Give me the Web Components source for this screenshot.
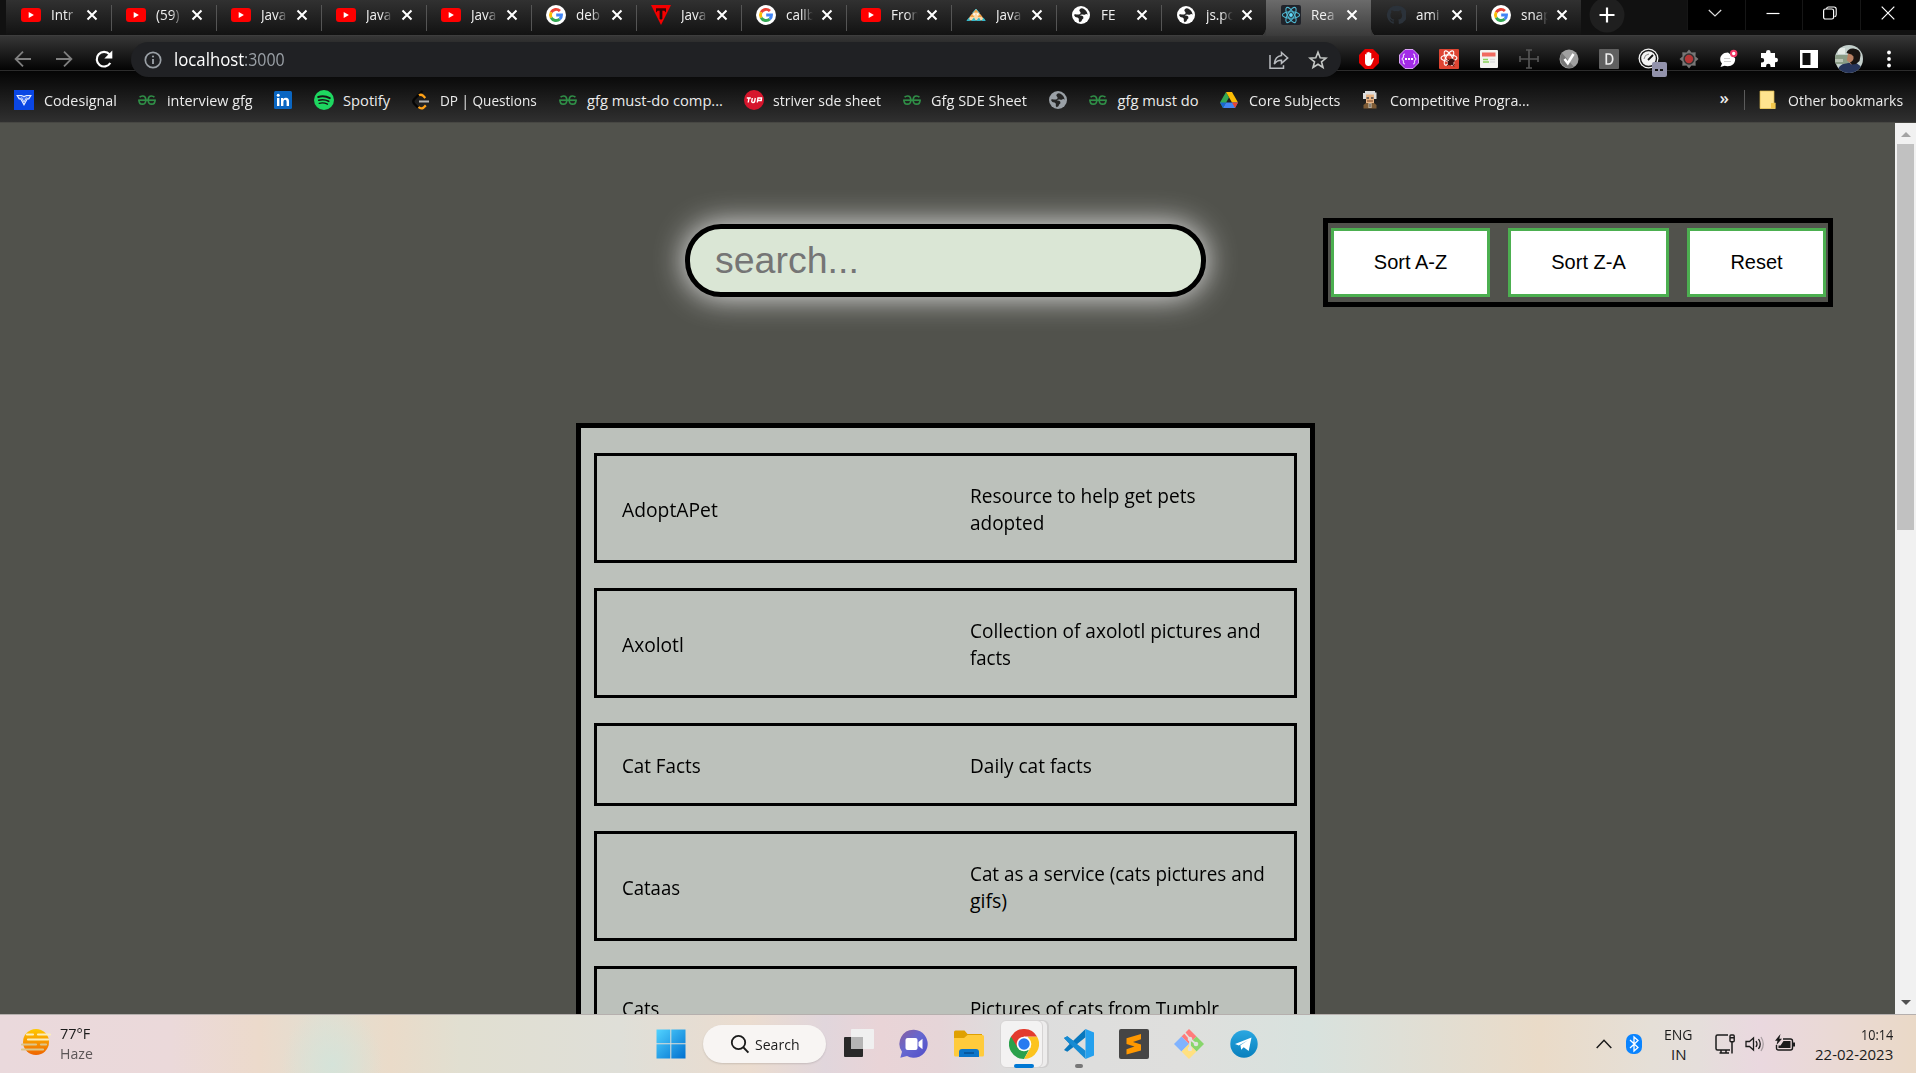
<!DOCTYPE html>
<html lang="en">
<head>
<meta charset="utf-8">
<title>React App</title>
<style>
html,body{margin:0;padding:0;height:100%;overflow:hidden;background:#51524c}
body{font-family:"Open Sans","Noto Sans",sans-serif;font-size:15px}
</style>
</head>
<body>
<desktop-screen></desktop-screen>
<script>
const gG='<circle cx="10" cy="10" r="10" fill="#fff"/><g fill="none" stroke-width="2.9"><path d="M5.2 7.3A5.5 5.5 0 0 1 13.9 6" stroke="#ea4335"/><path d="M5.2 7.3a5.6 5.6 0 0 0 0 5.4" stroke="#fbbc05"/><path d="M5.2 12.7a5.5 5.5 0 0 0 8.5 1.4" stroke="#34a853"/><path d="M13.7 14.1a5.4 5.4 0 0 0 1.8-4.1H10.2" stroke="#4285f4"/></g>';
const globe=c=>`<circle cx="10" cy="10" r="9" fill="${c}"/><path d="M10.5 3.2q-2.7 1-2 2.8 1.6 1 .9 2.7-1.800 1.300-4.800.6-1.400-.5-1.500.9 1 2.600 3.500 2.400 1.900.8 1.200 3.400l.8 1.200q2.300-.6 2.600-2.600 2-1 1-3-1.200-1.200-3.200-1 .4-1.400 2.700-1.200 1.900.8 2.800-.2 1.700-.4 2.100 1-.2-4.600-4.500-6.600z" fill="#242424"/>`;
const gfg='<g fill="none" stroke="#2f8d46" stroke-width="1.700"><path d="M1.200 10.200h17.600"/><path d="M2.600 7.300q1-1.300 3-1.300Q8.800 6 8.800 10.200T5.200 14.200Q2 14.200 2 10.200M17.400 7.300q-1-1.300-3-1.300Q11.200 6 11.200 10.200t3.600 4Q18 14.200 18 10.200"/></g>';
const ICONS={
youtube:[20,20,'<rect x="0" y="3" width="20" height="14" rx="3" fill="#f00"/><path d="M7.700 7.100v5.800l5.200-2.900z" fill="#fff"/>'],
google:[20,20,gG],
tri:[20,20,'<path d="M0 0h20L10 20z" fill="#f50000"/><path d="M5 3.200h10v4.200l-1.700-1.700h-1.900v8.200h-2.800V5.700H6.700L5 7.400z" fill="#3b0505"/><path d="M9.200 5.500h1.600v9H9.200z" fill="#111"/>'],
tents:[20,20,'<path d="M10 4L1 15.500h18z" fill="#f9d9a8"/><path d="M10 4L7.500 7.500h5zM6 9l2.500 3h-5zM14 9l2.500 3h-5z" fill="#f2a044"/><path d="M7 8.500h2.500L8 10.500zM10.500 8.500H13l-1.500 2z" fill="#fff"/><path d="M3 12.500L.3 16h3.700zM8 12.500L5 16h5zM13 12.500L10 16h5zM17.500 12.500L15.500 16h4.300z" fill="#35b8c9"/><path d="M10 4L6.500 8M10 4l3.500 4" stroke="#4bc3d0" stroke-width=".8"/>'],
globe:[20,20,globe('#fff')],
globegray:[20,20,globe('#9aa0a6')],
react:[20,20,'<rect width="20" height="20" rx="2" fill="#20232a"/><g fill="none" stroke="#4fb8d2" stroke-width="1.100"><ellipse cx="10" cy="10" rx="8.600" ry="3.300"/><ellipse cx="10" cy="10" rx="8.600" ry="3.300" transform="rotate(60 10 10)"/><ellipse cx="10" cy="10" rx="8.600" ry="3.300" transform="rotate(120 10 10)"/></g><circle cx="10" cy="10" r="1.900" fill="#61dafb"/>'],
github:[20,20,'<path d="M10 .8a9.200 9.200 0 0 0-2.900 17.900c.5.100.7-.2.700-.5v-1.700c-2.400.5-3-1-3.200-1.600l-.9-1.100c1 0 1.600.8 1.900 1.300.7 1 1.600.8 2.200.6 0-.5.300-.9.600-1.100-2-.3-4-1-4-4.400 0-1 .4-1.800 1-2.400-.1-.4-.4-1.300.1-2.500 0 0 .8-.2 2.500 1a8.600 8.600 0 0 1 4.500 0c1.700-1.200 2.500-1 2.500-1 .5 1.200.2 2.100.1 2.500.6.600 1 1.400 1 2.400 0 3.400-2.100 4.100-4.100 4.400.4.300.7.900.7 1.700v2.200c0 .3.100.6.600.5A9.200 9.200 0 0 0 10 .8z" fill="#2b323a"/>'],
close:[12,12,'<path d="M1.500 1.500l9 9M10.500 1.500l-9 9" stroke="#fff" stroke-width="2" fill="none"/>'],
plus:[36,36,'<circle cx="18" cy="18" r="17.500" fill="#1f1f1f"/><path d="M18 10.500v15M10.500 18h15" stroke="#fff" stroke-width="2.200"/>'],
down:[14,14,'<path d="M.8 4l6.200 6 6.200-6" fill="none" stroke="#ddd" stroke-width="1.200"/>'],
min:[14,14,'<path d="M.5 7.500h13" stroke="#fff" stroke-width="1.200"/>'],
max:[14,14,'<rect x=".6" y="3" width="10" height="10" rx="1.800" fill="none" stroke="#fff" stroke-width="1.200"/><path d="M3.500 2.800Q3.800 1 5.500 1H11q2.200 0 2.200 2.200v5.500q0 1.600-1.700 1.900" fill="none" stroke="#fff" stroke-width="1.100"/>'],
wclose:[14,14,'<path d="M.7.700l12.600 12.600M13.300.700L.700 13.300" stroke="#fff" stroke-width="1.200"/>'],
back:[20,20,'<path d="M18 10H3M10 2.600L2.600 10l7.400 7.400" fill="none" stroke="#7f7f7f" stroke-width="1.800"/>'],
fwd:[20,20,'<path d="M2 10h15M10 2.600l7.400 7.400-7.400 7.400" fill="none" stroke="#7f7f7f" stroke-width="1.800"/>'],
reload:[20,20,'<path d="M16.300 14A7.300 7.300 0 1 1 15.500 5.300" fill="none" stroke="#fff" stroke-width="2.200"/><path d="M18.300 1.500v8h-8z" fill="#fff"/>'],
info:[20,20,'<circle cx="10" cy="10" r="7.700" fill="none" stroke="#9aa0a6" stroke-width="1.700"/><path d="M10 9v5" stroke="#9aa0a6" stroke-width="1.900"/><circle cx="10" cy="6.500" r="1.100" fill="#9aa0a6"/>'],
share:[20,20,'<path d="M1 5v13.200h13.500v-3" fill="none" stroke="#b9bcc0" stroke-width="1.500"/><path d="M12.500 2.500l6.200 5.400-6.200 5.400v-3.100Q8 10 5.300 14 6 6.500 12.500 5.600z" fill="none" stroke="#b9bcc0" stroke-width="1.500"/>'],
star:[20,20,'<path d="M10 2.200l2.200 5.500 5.900.4-4.600 3.700 1.500 5.700L10 14.300l-5 3.200 1.500-5.700L1.900 8.100l5.900-.4z" fill="none" stroke="#c4c7c5" stroke-width="1.600"/>'],
adblock:[20,20,'<path d="M6 0h8l6 6v8l-6 6H6l-6-6V6z" fill="#e60000"/><path d="M6 10V5.500q.8-1 1.500 0V9V3.800q.8-1 1.600 0V8.500V3.200q.8-1 1.600 0v5.300V4.200q.8-1 1.600 0v6.800l1.300-1.700q1-.7 1.400.3L13 14.500Q12 17 9.700 17 6 17 6 13z" fill="#fff"/>'],
bugs:[20,20,'<path d="M6 .5h8L19.500 6v8L14 19.500H6L.5 14V6z" fill="#a32be8" stroke="#d9a1f7" stroke-width="1"/><path d="M6 5q-2 0-1.500 3L3 10l1.500 2Q4 15 6 15M14 5q2 0 1.500 3l1.500 2-1.500 2q.5 3-1.500 3" stroke="#e9cffb" fill="none" stroke-width="1.200"/><path d="M6 10h2m1 0h2m1 0h2" stroke="#fff" stroke-width="2"/>'],
redreact:[20,20,'<rect width="20" height="20" rx="1" fill="#dd4432"/><g fill="none" stroke="#fff" stroke-width="1.100"><ellipse cx="10" cy="9" rx="8" ry="3.100"/><ellipse cx="10" cy="9" rx="8" ry="3.100" transform="rotate(60 10 9)"/><ellipse cx="10" cy="9" rx="8" ry="3.100" transform="rotate(120 10 9)"/></g><ellipse cx="12" cy="13" rx="2.500" ry="3.700" transform="rotate(35 12 13)" fill="#3c1010"/><path d="M7.500 11.500l8 4M8 16.500l8-5M9 9.500l6 8" stroke="#3c1010"/>'],
doc:[20,20,'<rect x="1" y="1" width="18" height="18" rx="1" fill="#f3f3ef"/><rect x="3" y="3.500" width="13.500" height="4" fill="#f06b60"/><path d="M4 10.500h5M4 13h6" stroke="#8bd35b" stroke-width="1.600"/><path d="M11 10.500h5M11 13h5" stroke="#ddd" stroke-width="1.500"/>'],
cross:[20,20,'<path d="M10 1v18M1 10h18M7 1h6M7 19h6M1 7v6M19 7v6M8 10h4" stroke="#555" stroke-width="1.700"/>'],
check:[20,20,'<circle cx="10" cy="10" r="9.500" fill="#a0a0a0"/><path d="M3 4a9.500 9.500 0 0 0 12 14" fill="#777"/><path d="M5.500 10l3.300 4.200L14.500 5" fill="none" stroke="#fff" stroke-width="2.600"/>'],
d:[20,20,'<rect width="20" height="20" rx="1" fill="#606060"/><path d="M7.300 5v10h2.200q4.200 0 4.200-5T9.500 5z" fill="none" stroke="#eee" stroke-width="1.700"/>'],
gauge:[22,22,'<circle cx="10.500" cy="10.500" r="10" fill="#f2f2f2"/><circle cx="10.500" cy="10.500" r="8" fill="#f2f2f2" stroke="#151515" stroke-width="1.400"/><path d="M10 12l5-5" stroke="#111" stroke-width="1.800"/><path d="M6 11q.5-4.500 5-5" stroke="#888" fill="none"/>'],
gearred:[20,20,'<path d="M10 .5l2.500 3 4.200-.2-.2 4.200 3 2.500-3 2.500.2 4.200-4.200-.2-2.500 3-2.500-3-4.200.2.200-4.200-3-2.500 3-2.500-.2-4.200 4.200.2z" fill="#777"/><circle cx="10" cy="10" r="4.900" fill="#b53636" stroke="#333" stroke-width="1.500"/>'],
chat:[20,20,'<path d="M9 3.500c-8 0-9.500 8-6 11L1.500 18l4-1.200C13 18.500 17 14 16 9z" fill="#fff"/><circle cx="14.700" cy="4.500" r="2.700" fill="#fff" stroke="#f43b68" stroke-width="2"/><path d="M5 9.500h6M5 12.500h7" stroke="#ccc" stroke-width="1.200"/>'],
puzzle:[20,20,'<path d="M7 4V3.200a2.300 2.300 0 0 1 4.600 0V4H16v4.700h.700a2.300 2.300 0 0 1 0 4.600H16V18h-4.500v-1a2.200 2.200 0 0 0-4.400 0v1H2v-4.600h1a2.200 2.200 0 0 0 0-4.400H2V4z" fill="#fff"/>'],
panel:[20,20,'<path d="M1 1h18v18H1z" fill="#fff"/><path d="M3.500 4h8v12h-8z" fill="#111"/>'],
avatar:[28,28,'<defs><clipPath id="c"><circle cx="14" cy="14" r="14"/></clipPath></defs><g clip-path="url(#c)"><rect width="28" height="28" fill="#c3cfcb"/><path d="M0 10h14v9H0z" fill="#8a9c86"/><path d="M3 3h7v6H3z" fill="#e4eae6"/><path d="M0 14h8v3H0z" fill="#b9c4b5"/><path d="M2 28q1-9 9-9.500l7-1.500q9 2 10 11z" fill="#27355b"/><path d="M13 8.500l5-2 4 5v6l-6 2-2-2.500-2.200-1.500z" fill="#b98063"/><path d="M11.500 8Q13 3 18.500 3.500q7 .5 7 7l-1 5.500-3.500 3-4 .5-2-2q4-1.500 3.500-6l-2-2z" fill="#191412"/></g>'],
dots:[20,20,'<g fill="#fff"><circle cx="10" cy="3.500" r="1.900"/><circle cx="10" cy="10" r="1.900"/><circle cx="10" cy="16.500" r="1.900"/></g>'],
codesignal:[20,20,'<rect width="20" height="20" fill="#0a46e4"/><path d="M3.200 5.500h4.300l2.500 1.100 2.500-1.100h4.300l-2 3.300h-1.500L10 14.800 6.700 8.800H5.200z" fill="#3d6df0" stroke="#e6edff" stroke-width="1.200"/><path d="M7.500 7.500l2.500 4.500 2.500-4.500" fill="none" stroke="#cfdcff" stroke-width="1"/>'],
gfg:[20,20,gfg],
linkedin:[20,20,'<rect x="1" y="1" width="18" height="18" rx="1.500" fill="#0a66c2"/><path d="M4 8h2.400v8H4zM8 8h2.300v1.200Q11 7.800 13 7.800q3 0 3 3.600V16h-2.400v-4.200q0-2-1.500-2-1.700 0-1.700 2.100V16H8z" fill="#fff"/><circle cx="5.200" cy="5.300" r="1.500" fill="#fff"/>'],
spotify:[20,20,'<circle cx="10" cy="10" r="10" fill="#1ed760"/><g fill="none" stroke="#151515" stroke-linecap="round"><path d="M4.200 7q6-1.700 11.600 1.100" stroke-width="2"/><path d="M4.800 10.300q5.200-1.400 9.900 1" stroke-width="1.600"/><path d="M5.200 13.300q4.400-1.100 8.300.9" stroke-width="1.300"/></g>'],
leet:[20,20,'<path d="M11.500 1L3 9.500q-1.500 2 0 4l4 4" fill="none" stroke="#050505" stroke-width="2.300"/><path d="M8 5.300q2-1.300 4 .4l2.300 2.300M7.500 17q2.500 2.300 5 .7l2.300-2.300" fill="none" stroke="#ffa116" stroke-width="2.300"/><path d="M8 11.500h10" stroke="#b3b3b3" stroke-width="2"/>'],
tuf:[20,20,'<circle cx="10" cy="10" r="10" fill="#d6152c"/><path d="M2.800 8h4M5 8l-.8 4.500M8.300 8l-.6 3.700q.2.900 1.300.8 1.200 0 1.600-.9l.7-3.600M13.300 12.500L14 8h3.500l-.3 2.500h-3" fill="none" stroke="#fff" stroke-width="1.400"/>'],
drive:[20,20,'<path d="M7 2L1 12.600 4 18l6-10.500z" fill="#34a853"/><path d="M7 2h6l6 10.600h-6z" fill="#fbbc04"/><path d="M7 12.600h12L16 18H4z" fill="#4285f4"/><path d="M13 12.600h6L16 18z" fill="#ea4335"/><path d="M7 12.600H1L4 18z" fill="#1967d2"/>'],
einstein:[20,20,'<path d="M5 1h10v1.500h1.500V9H14V5H6v4H3V3h2z" fill="#ddd"/><path d="M6 4.500h8V13H6z" fill="#e8b382"/><path d="M6.500 8h2.500m2 0h2.500" stroke="#444" stroke-width="1.300"/><path d="M7 11h6" stroke="#8c5a3a" stroke-width="1.300"/><path d="M6 13h8l2.500 2v3.500h-13V15z" fill="#7c5a35"/><path d="M8.500 13h3v5h-3z" fill="#d9cdbb"/><path d="M9.500 13.500h1v4h-1z" fill="#333"/>'],
folder:[20,20,'<path d="M2 1h14v13h1v5H2z" fill="#ffe48f"/><path d="M13 13h4v5h-4z" fill="#f4c84b"/><path d="M2 1h14v12h1.500v5.500H2z" fill="none" stroke="#d9b64c" stroke-width=".7"/>'],
haze:[30,28,'<defs><linearGradient id="h" x2="0" y2="1"><stop stop-color="#ffc900"/><stop offset="1" stop-color="#ef6400"/></linearGradient></defs><circle cx="15" cy="14" r="13" fill="url(#h)"/><g stroke-width="2.200" stroke-linecap="round"><path d="M6 6.500h6m5 0h12M7 11.500h20" stroke="#fbeebc"/><path d="M1 16.500h14m5 0h5M1 21.500h21" stroke="#dcc68a"/></g>'],
win:[30,30,'<defs><linearGradient id="w" x2="1" y2="1"><stop stop-color="#52d3ff"/><stop offset="1" stop-color="#0070d0"/></linearGradient></defs><path d="M.5.500H14.300V14.300H.5zM15.300.500H29.500V14.300H15.300zM.5 15.300H14.300V29.500H.5zM15.300 15.300H29.500V29.500H15.300z" fill="url(#w)"/>'],
mag:[20,20,'<circle cx="8.500" cy="8.500" r="6.700" fill="none" stroke="#1a1a1a" stroke-width="1.800"/><path d="M13.400 13.400l5 5.200" stroke="#1a1a1a" stroke-width="2"/>'],
task:[30,30,'<rect x="0" y="8" width="19" height="20" rx="1" fill="#292929"/><rect x="7" y="0" width="23" height="20" rx="1" fill="#f0f0f0"/><rect x="7" y="8" width="12" height="12" fill="#b5b5b5"/>'],
teams:[30,30,'<defs><linearGradient id="t" x1="0" y1="0" x2="1" y2="1"><stop stop-color="#8a5f9e"/><stop offset=".45" stop-color="#6668d0"/><stop offset="1" stop-color="#514dc8"/></linearGradient></defs><path d="M15 .8a14 14 0 1 1-7 26.300L1.300 28.700 3 22.800A14 14 0 0 1 15 .8z" fill="url(#t)"/><rect x="6.500" y="9" width="12" height="12" rx="2" fill="#fff"/><path d="M19.500 13l4-3.300v10.600l-4-3.300z" fill="#fff"/>'],
explorer:[30,30,'<path d="M0 3q0-1.500 1.500-1.500h9L13.500 5H28v5H0z" fill="#dfa000"/><path d="M0 9h10l3.500-3H28.500Q30 6 30 7.500V26q0 1.500-1.500 1.500h-27Q0 27.500 0 26z" fill="#ffcb3c"/><path d="M5 28v-5q0-3 3-3h14q3 0 3 3v5z" fill="#0c75c9"/><path d="M10 24h10" stroke="#064f91" stroke-width="1.500"/>'],
chrome:[30,30,'<path d="M2 7.500A15 15 0 0 0 15 30l6.200-11.500L15 15z" fill="#2aa14b"/><path d="M28 7.500A15 15 0 0 1 15 30l6.500-11.200L19 7.500z" fill="#fcc31e"/><path d="M15 7.500h13A15 15 0 0 0 2 7.500l6.500 11z" fill="#e33b2e"/><circle cx="15" cy="15" r="7.300" fill="#fff"/><circle cx="15" cy="15" r="5.700" fill="#287af0"/>'],
vscode:[30,30,'<path d="M21.500 0L9.200 11.800 3.300 7.300 0 9l5.600 6L0 21l3.300 1.700 5.900-4.500L21.500 8.300z" fill="#0877bd"/><path d="M0 9l3.300-1.700L21.500 21.700V30L9.500 18.300z" fill="#168bd3"/><path d="M21.500 0L30 3.500v23L21.500 30z" fill="#24a0ee"/>'],
sublime:[30,30,'<rect width="30" height="30" rx="2" fill="#454545"/><path d="M22 5v5.300L14 13l8 2.600v5.800L7.500 25.500v-5.200l8-2.800-8-2.600V9.200z" fill="#ff9800"/>'],
git:[30,30,'<path d="M15 0l7.500 7.500L15 15 7.500 7.500z" fill="#ff7b7b"/><path d="M22.500 7.500L30 15l-7.500 7.500L15 15z" fill="#88d66c"/><path d="M7.500 7.500L15 15l-7.500 7.500L0 15z" fill="#80b3ff"/><path d="M15 15l7.500 7.500L15 30l-7.500-7.500z" fill="#ffe080"/><path d="M10 3l6 7v10M16 10l6 5" fill="none" stroke="#e1e2e0" stroke-width="1.800"/><circle cx="16" cy="10" r="2.300" fill="#e1e2e0"/><circle cx="22" cy="15" r="2.300" fill="#e1e2e0"/><circle cx="16" cy="20" r="2.300" fill="#e1e2e0"/>'],
telegram:[28,28,'<defs><linearGradient id="g" x2="0" y2="1"><stop stop-color="#2aa7e1"/><stop offset="1" stop-color="#087fbd"/></linearGradient></defs><circle cx="14" cy="14" r="13.700" fill="url(#g)"/><path d="M5 14L21.500 7.500 18.700 21l-5-3.700-2.500 2.500-.8-4.600 7.600-5-9.200 5.200z" fill="#fff"/>'],
up:[16,10,'<path d="M.7 9L8 1.300 15.300 9" fill="none" stroke="#1b1b1b" stroke-width="1.500"/>'],
bt:[16,20,'<rect width="16" height="20" rx="7" fill="#0a84ff"/><path d="M4 6l8 7.500L8 17V3l4 3.500L4 14" fill="none" stroke="#fff" stroke-width="1.300"/>'],
monitor:[20,20,'<path d="M13 1H2.500Q1 1 1 2.500v12Q1 16 2.500 16H15M6 16v3m5-3v3M4.500 19H14" fill="none" stroke="#1b1b1b" stroke-width="1.500"/><rect x="15" y="1" width="4.200" height="6.800" rx="1" fill="none" stroke="#1b1b1b" stroke-width="1.400"/><path d="M15 3.700h4M17 8v11.500" stroke="#1b1b1b" stroke-width="1.500"/>'],
speaker:[20,20,'<path d="M1 7.500h3.500L8.500 4v12l-4-3.500H1z" fill="none" stroke="#1b1b1b" stroke-width="1.300"/><path d="M11 7q2 3 0 6M13.500 5q3.500 5 0 10" fill="none" stroke="#1b1b1b" stroke-width="1.300"/><path d="M16 3q4.500 7 0 14" fill="none" stroke="#a99fa3" stroke-width="1.300"/>'],
battery:[20,20,'<path d="M8 5h7.500Q17.500 5 17.500 7v7q0 2-2 2H3.500q-2 0-2-2v-3" fill="none" stroke="#1b1b1b" stroke-width="1.400"/><path d="M8.500 7H15.500v7h-12v-2.500h2z" fill="#1b1b1b"/><path d="M18 8.500h2v4h-2z" fill="#1b1b1b"/><path d="M5.500 0L0 6.700h2.500L1.500 11 7 4.800H4.300z" fill="#1b1b1b"/>']
};
const define=(n,css,html,after)=>customElements.define(n,class extends HTMLElement{
  connectedCallback(){
    if(this.shadowRoot)return;
    const r=this.attachShadow({mode:'open'});
    r.innerHTML=`<style>${css}</style>${typeof html==='function'?html(this):html}`;
    if(after)after(this,r);
  }
});
const at=(e,n,d='')=>e.getAttribute(n)??d;

define('ui-icon',':host{display:block;flex:none}svg{display:block}',e=>{
  const [w,h,b]=ICONS[at(e,'name')];
  return `<svg width="${w}" height="${h}" viewBox="0 0 ${w} ${h}">${b}</svg>`;
});

/* Text squeezed or stretched horizontally so it occupies exactly w pixels. */
define('fit-text',':host{display:block;flex:none;white-space:pre}span{display:inline-block;transform-origin:0 50%}',
  e=>`<span>${at(e,'text')}</span>`,
  (e,r)=>{const s=r.querySelector('span'),w=+at(e,'w');e.style.width=w+'px';s.style.transform=`scaleX(${w/s.offsetWidth})`;});

define('browser-tab',`:host{display:flex;flex:none;align-items:center;box-sizing:border-box;width:105px;height:35px;padding:0 0 5px 15px;position:relative;color:#f1f1f1;background:linear-gradient(#313131,#121212)}
:host([active]){background:linear-gradient(#6b6b6b,#393939);height:37px;padding-bottom:7px;z-index:1}
:host([active])::before,:host([active])::after{content:"";position:absolute;bottom:0;width:9px;height:9px}
:host([active])::before{left:-9px;background:radial-gradient(circle at 0 0,transparent 8.500px,#393939 9px)}
:host([active])::after{right:-9px;background:radial-gradient(circle at 100% 0,transparent 8.500px,#393939 9px)}
.t{width:28px;margin:0 7px 0 10px;overflow:hidden;white-space:pre;line-height:20px;font-size:14.500px;-webkit-mask:linear-gradient(90deg,#000 55%,transparent 96%)}
.t span{display:inline-block;transform:scaleX(.93);transform-origin:0 0}
:host([plain]) .t{-webkit-mask:none}
i{width:1px;height:26px;background:#555;margin:5px -1px 0 auto;position:relative;z-index:1}`,
 e=>`<ui-icon name="${at(e,'icon')}"></ui-icon><div class="t"><span>${at(e,'text')}</span></div><ui-icon name="close"></ui-icon>${e.hasAttribute('nosep')?'':'<i></i>'}`);

define('tab-strip',`:host{display:flex;height:35px;background:#111;border-bottom:1px solid #3d3d3d;padding-left:6px}
.new{width:36px;margin:-3px 0 0 8px}
.win{display:flex;margin-left:auto;height:30px;background:#000;gap:1px;width:229px}
.win div{flex:1;display:flex;justify-content:center;align-items:center;padding:0 1px 5px 0;height:25px;border-left:1px solid #161616}`,
 ()=>{
  const T=[['youtube','Intr'],['youtube','(59)'],['youtube','Java'],['youtube','Java'],['youtube','Java'],['google','deb'],['tri','Java'],['google','callb'],['youtube','Fron'],['tents','Java'],['globe','FE'],['globe','js.po'],['react','Rea'],['github','ami'],['google','snap']];
  return T.map(([i,t],n)=>`<browser-tab icon="${i}" text="${t}" ${n==12?'active':''} ${n==10?'plain':''} ${n==11||n==12||n==14?'nosep':''}></browser-tab>`).join('')+
  '<div class="new"><ui-icon name="plus"></ui-icon></div><div class="win">'+['down','min','max','wclose'].map(i=>`<div><ui-icon name="${i}"></ui-icon></div>`).join('')+'</div>';
 });

define('tool-bar',`:host{display:flex;height:34px;background:linear-gradient(#363636,#030303);border-bottom:1px solid #2c2c2c;align-items:flex-start;position:relative;z-index:1}
.nav{display:flex;padding:13px 17px 0 13px;gap:20.500px;width:101px}
.pill{display:flex;align-items:center;box-sizing:border-box;width:1210px;height:35px;margin-top:6px;border-radius:18px;background:#202124;padding:0 13px 0 12px;color:#fff;font-size:17.500px;line-height:22px}
.pill fit-text{margin-top:-1px}
.pill fit-text:first-of-type{margin-left:11px}.port{color:#9aa0a6}
.pill .s{margin-left:auto;margin-right:19px}
.ext{display:flex;margin-left:7.500px;padding-top:13px}
.e{width:40px;display:flex;justify-content:center;height:20px;align-items:center;position:relative}
b{position:absolute;left:23px;top:13px;width:15px;height:15px;border-radius:2px;background:#9292ab;display:flex;align-items:center;justify-content:center}
b::after{content:"";width:8px;height:2px;background:linear-gradient(90deg,#111 40%,transparent 40% 60%,#111 60%)}`,
 ()=>`<div class="nav"><ui-icon name="back"></ui-icon><ui-icon name="fwd"></ui-icon><ui-icon name="reload"></ui-icon></div>
 <div class="pill"><ui-icon name="info"></ui-icon><fit-text text="localhost" w="70"></fit-text><fit-text class="port" text=":3000" w="41"></fit-text><ui-icon class="s" name="share"></ui-icon><ui-icon name="star"></ui-icon></div>
 <div class="ext">${['adblock','bugs','redreact','doc','cross','check','d','gauge','gearred','chat','puzzle','panel','avatar','dots'].map(i=>`<div class="e"><ui-icon name="${i}"></ui-icon>${i=='gauge'?'<b></b>':''}</div>`).join('')}</div>`);

define('book-mark',':host{display:flex;align-items:center;gap:9.500px;flex:none;line-height:20px}fit-text{margin-top:-1px}',
 e=>`<ui-icon name="${at(e,'icon')}"></ui-icon>${at(e,'text')?`<fit-text text="${at(e,'text')}" w="${at(e,'w')}"></fit-text>`:''}`);

define('bookmarks-bar',`:host{display:flex;box-sizing:border-box;height:52px;background:linear-gradient(#050505,#303030);border-bottom:1px solid #474743;padding:7px 13px 0 14px;gap:20.500px;align-items:center;color:#ebebeb;font-size:14.700px}
.more{margin-left:auto;font-weight:600;font-size:17px;margin-right:-6px;padding-bottom:5px}i{width:1px;height:20px;background:#5b5b5b;margin-right:-7px}`,
 ()=>[['codesignal','Codesignal',73],['gfg','interview gfg',86],['linkedin'],['spotify','Spotify',47],['leet','DP | Questions',97],['gfg','gfg must-do comp...',136],['tuf','striver sde sheet',108],['gfg','Gfg SDE Sheet',96],['globegray'],['gfg','gfg must do',81],['drive','Core Subjects',91],['einstein','Competitive Progra...',140]].map(([i,t,w])=>`<book-mark icon="${i}" ${t?`text="${t}" w="${w}"`:''}></book-mark>`).join('')+
 '<span class="more">»</span><i></i><book-mark icon="folder" text="Other bookmarks" w="115.500"></book-mark>');

define('search-box',`:host{display:flex;align-items:center;box-sizing:border-box;width:521px;height:73px;border:5px solid #000;border-radius:36px;background:#dae6d5;box-shadow:0 0 31px #efefef;padding-left:25px;font:37.500px "Liberation Sans",Arial,sans-serif;color:#757575}`,
 '<slot></slot>');
define('sort-button',`:host{display:flex;align-items:center;justify-content:center;box-sizing:border-box;height:69px;border:3px solid #4caf50;background:#fff;color:#000;font:20px "Liberation Sans",Arial,sans-serif}`,'<slot></slot>');
define('sort-controls',`:host{display:flex;box-sizing:border-box;width:510px;height:89px;border:5px solid #000;padding:5px 2px 0 3px;justify-content:space-between}
.a{width:159px}.b{width:161px}.c{width:139px}`,
 '<sort-button class="a">Sort A-Z</sort-button><sort-button class="b">Sort Z-A</sort-button><sort-button class="c">Reset</sort-button>');

define('api-card',`:host{display:flex;align-items:center;box-sizing:border-box;border:3px solid #000;padding:26px 25px 24px;color:#000;font-size:19.500px;line-height:27px}
.n{width:348px}`,
 e=>`<div class="n"><fit-text text="${at(e,'name')}" w="${at(e,'nw')}"></fit-text></div><div>${at(e,'lines').split('|').map(l=>{const[t,w]=l.split('~');return `<fit-text text="${t}" w="${w}"></fit-text>`}).join('')}</div>`);

define('api-list',`:host{display:flex;flex-direction:column;gap:25px;box-sizing:border-box;width:739px;flex:none;border:5px solid #000;background:#bcc1bb;padding:25px 13px}`,
 ()=>[['AdoptAPet',96,'Resource to help get pets~226|adopted~74'],['Axolotl',62,'Collection of axolotl pictures and~291|facts~41'],['Cat Facts',79,'Daily cat facts~122'],['Cataas',58,'Cat as a service (cats pictures and~295|gifs)~37'],['Cats',37,'Pictures of cats from Tumblr~249']].map(([n,w,l])=>`<api-card name="${n}" nw="${w}" lines="${l}"></api-card>`).join(''));

define('scroll-bar',`:host{display:flex;flex-direction:column;align-items:center;justify-content:space-between;box-sizing:border-box;width:21px;background:#f1f1f1;padding:8px 0 8px}
.thumb{width:17px;height:386px;background:#c1c1c1;margin:7px 0 auto}
svg{display:block}`,
 '<svg width="10" height="6"><path d="M0 6l5-5 5 5z" fill="#a3a3a3"/></svg><div class="thumb"></div><svg width="10" height="6"><path d="M0 0h10L5 5z" fill="#505050"/></svg>');

define('web-page',`:host{display:flex;height:891px;overflow:hidden;background:#51524c}
main{flex:1;height:891px;overflow:hidden}
.top{display:flex;align-items:flex-start;padding:95px 0 0 685px;height:205px}
search-box{margin-top:6px}sort-controls{margin-left:117px}
api-list{margin-left:576px}`,
 '<main><div class="top"><search-box>search...</search-box><sort-controls></sort-controls></div><api-list></api-list></main><scroll-bar></scroll-bar>');

define('task-bar',`:host{display:flex;box-sizing:border-box;height:59px;border-top:1px solid #b5afad;color:#1b1b1b;font-size:15px;line-height:20px;
background:radial-gradient(ellipse 50px 60px at 332px 50px,#d5e3d9,transparent),linear-gradient(90deg,#ead9dc 0,#ebd9da 170px,#ecdacb 260px,#e2dfd2 325px,#eadbc9 390px,#e1dfd1 460px,#dfdfd8 620px,#ebdccf 750px,#e1d6dc 825px,#e9d4d7 880px,#e6d5d8 940px,#dddddd 1010px,#dfdfdd 1180px,#d8e2de 1310px,#dfdfd6 1400px,#eadbc8 1540px,#e5dfd7 1650px,#e5dedb 1700px,#ead8df 1760px,#ead9d5 1830px,#ead9c7 1916px)}
.w{display:flex;gap:9px;padding:13px 0 0 21px;width:635px;box-sizing:border-box}.w .t{margin-top:-5px}.w .t *+*{color:#5c5657}
.apps{display:flex;align-items:center;gap:25px;padding-left:20.500px}
.pill{display:flex;align-items:center;box-sizing:border-box;width:123px;height:38px;padding-left:27px;border-radius:19px;background:#f8f5f3;box-shadow:0 1px 2px #0002;gap:5px;margin:0 -7.500px}
.app{position:relative;display:flex;width:30px;height:58px;align-items:center;justify-content:center}
.on::before{content:"";position:absolute;left:-9px;top:5px;width:41px;height:46px;border:1px solid #d6d4d4;border-radius:6px;background:#f3f2f2;box-shadow:5px 0 0 -1px #edecec,6px 0 0 #cfcece}
.app ui-icon{position:relative}
.on::after,.dot::after{content:"";position:absolute;left:5px;top:49px;width:20px;height:4px;border-radius:2px;background:#0078d4}
.dot::after{left:11px;width:8px;background:#777}
.tray{display:flex;align-items:center;margin-left:auto;padding-right:23px}
.c{display:flex;flex-direction:column;align-items:center;margin-top:-1px}.r{align-items:flex-end}`,
 ()=>`<div class="w"><ui-icon name="haze"></ui-icon><div class="t"><fit-text text="77°F" w="30"></fit-text><fit-text text="Haze" w="33"></fit-text></div></div>
 <div class="apps"><div class="app"><ui-icon name="win"></ui-icon></div>
 <div class="pill"><ui-icon name="mag"></ui-icon><fit-text text="Search" w="45"></fit-text></div>
 ${['task','teams','explorer','chrome','vscode','sublime','git','telegram'].map(i=>`<div class="app ${i=='chrome'?'on':i=='vscode'?'dot':''}"><ui-icon name="${i}"></ui-icon></div>`).join('')}</div>
 <div class="tray"><ui-icon name="up" style="margin-right:14px"></ui-icon><ui-icon name="bt" style="margin-right:22px"></ui-icon><div class="c" style="margin-right:22px"><fit-text text="ENG" w="29"></fit-text><fit-text text="IN" w="15"></fit-text></div>
 <ui-icon name="monitor" style="margin-right:10px"></ui-icon><ui-icon name="speaker" style="margin-right:10px"></ui-icon><ui-icon name="battery" style="margin-right:20px"></ui-icon><div class="c r"><fit-text text="10:14" w="32"></fit-text><fit-text text="22-02-2023" w="78"></fit-text></div></div>`);

define('desktop-screen',':host{display:flex;flex-direction:column;width:1916px;height:1073px;overflow:hidden}:host>*{flex:none}',
 '<tab-strip></tab-strip><tool-bar></tool-bar><bookmarks-bar></bookmarks-bar><web-page></web-page><task-bar></task-bar>');
</script>
</body>
</html>
